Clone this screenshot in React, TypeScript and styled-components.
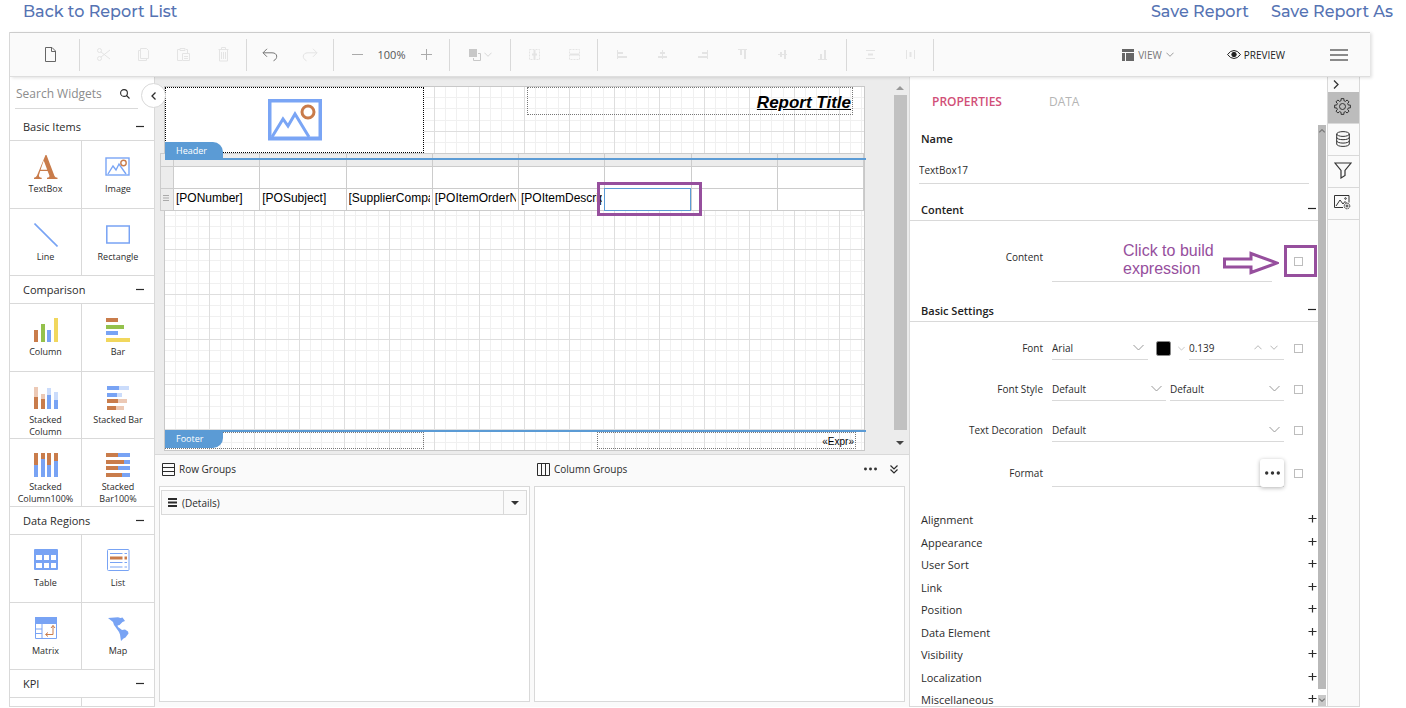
import React, { ReactNode } from "react";
import styled, { createGlobalStyle, css } from "styled-components";

const ui = `"Segoe UI", "Open Sans", "Noto Sans", sans-serif`;
const arial = `"Liberation Sans", Arial, sans-serif`;
const line = "#d9d9d9";
const blue = "#5b9bd5";
const iconBlue = "#7aa5f5";
const iconRust = "#c97b4a";
const purple = "#964f9d";

const GlobalStyle = createGlobalStyle`
  *, *::before, *::after { box-sizing: border-box; }
  body { margin: 0; background: #fff; color: #2b2b2b; font-family: ${ui}; font-size: 10px; }
  button, input, select, textarea { font: inherit; color: inherit; }
  button { padding: 0; border: 0; background: none; cursor: pointer; }
  h2, h3, p { margin: 0; font: inherit; }
  svg { display: block; flex: none; }
`;

/* ---------- page frame ---------- */

const Screen = styled.div`
  display: flex;
  flex-direction: column;
  height: 100vh;
  overflow: hidden;
`;

const TopNav = styled.nav`
  display: flex;
  gap: 22px;
  flex: none;
  height: 32px;
  padding: 0 13px 0 23px;
`;

const NavLink = styled.a<{ $grow?: boolean }>`
  color: #5573b3;
  font-family: Montserrat, Inter, sans-serif;
  font-size: 16px;
  font-weight: 500;
  line-height: 24px;
  text-decoration: none;
  margin-right: ${(p) => (p.$grow ? "auto" : "0")};
`;

const Designer = styled.main`
  display: flex;
  flex-direction: column;
  flex: 1;
  min-height: 0;
  margin: 0 46px 1px 9px;
  border-left: 1px solid ${line};
`;

const Body = styled.div`
  display: flex;
  flex: 1;
  min-height: 0;
`;

/* ---------- toolbar ---------- */

const Toolbar = styled.div`
  position: relative;
  z-index: 3;
  display: flex;
  align-items: center;
  flex: none;
  height: 45px;
  margin-right: -10px;
  padding-left: 12px;
  border-top: 1px solid #ccc;
  border-bottom: 1px solid #dedede;
  background: #fafafa;
  box-shadow: 2px 1px 3px rgba(0, 0, 0, 0.12);
`;

const ToolGroup = styled.div<{ $pad?: number }>`
  display: flex;
  align-items: center;
  height: 32px;
  padding: 0 ${(p) => p.$pad ?? 3}px;
  border-right: 1px solid ${line};
`;

const ToolButton = styled.button<{ $tone?: string; $width?: number }>`
  display: flex;
  align-items: center;
  justify-content: center;
  gap: 3px;
  width: ${(p) => p.$width ?? 40}px;
  height: 32px;
  color: ${(p) => p.$tone ?? "#e4e4e4"};
`;

const ZoomLabel = styled.span`
  width: 29px;
  text-align: center;
  color: #555;
  font-size: 11px;
`;

const ToolEnd = styled.div`
  display: flex;
  align-items: center;
  margin-left: auto;
  padding-right: 22px;
`;

const EndButton = styled.button<{ $dark?: boolean; $gap: number }>`
  display: flex;
  align-items: center;
  gap: ${(p) => (p.$dark ? 3 : 4)}px;
  height: 32px;
  margin-right: ${(p) => p.$gap}px;
  color: ${(p) => (p.$dark ? "#222" : "#777")};
`;

/* ---------- widget panel ---------- */

const WidgetPanel = styled.aside`
  position: relative;
  z-index: 2;
  flex: none;
  width: 145px;
  border-right: 1px solid ${line};
  border-bottom: 1px solid ${line};
  background: #fff;
`;

const WidgetScroll = styled.div`
  height: 100%;
  overflow: hidden;
`;

const SearchBox = styled.label`
  display: flex;
  align-items: center;
  height: 32px;
  margin: 0 16px 4px 5px;
  padding: 2px 8px 0 1px;
  border-bottom: 1px solid ${line};
`;

const SearchInput = styled.input`
  flex: 1;
  min-width: 0;
  padding: 0;
  border: 0;
  outline: 0;
  background: none;
  font-size: 12px;
  &::placeholder { color: #8c8c8c; opacity: 1; }
`;

const CollapseButton = styled.button`
  position: absolute;
  top: 6px;
  right: -12px;
  display: flex;
  align-items: center;
  justify-content: center;
  width: 25px;
  height: 25px;
  border: 1px solid ${line};
  border-radius: 50%;
  background: #fff;
`;

const SectionButton = styled.button`
  display: flex;
  align-items: center;
  justify-content: space-between;
  width: 100%;
  height: 28px;
  padding: 0 10px 0 13px;
  border-bottom: 1px solid ${line};
  font-size: 11px;
`;

const WidgetGrid = styled.div`
  display: grid;
  grid-template-columns: 1fr 1fr;
  grid-auto-rows: 68px 67px;
`;

const WidgetButton = styled.button`
  display: flex;
  flex-direction: column;
  align-items: center;
  gap: 4px;
  padding: 14px 7px 0;
  border-bottom: 1px solid ${line};
  font-size: 9px;
  line-height: 12px;
  &:nth-child(odd) { border-right: 1px solid ${line}; }
`;

/* ---------- canvas ---------- */

const Center = styled.section`
  display: flex;
  flex-direction: column;
  flex: 1;
  min-width: 0;
`;

const CanvasArea = styled.div`
  display: flex;
  justify-content: space-between;
  flex: 1;
  min-height: 0;
  padding: 9px 2px 0 9px;
  overflow: hidden;
  background: #ececec;
`;

const ReportPage = styled.div`
  flex: none;
  width: 701px;
  height: 365px;
  border: 1px solid #c8c8c8;
  background: #fff;
`;

const Band = styled.div<{ $height: number }>`
  position: relative;
  height: ${(p) => p.$height}px;
  background-color: #fff;
  background-image:
    linear-gradient(to right, transparent 44px, #dedede 44px),
    linear-gradient(to bottom, transparent 44px, #dedede 44px),
    linear-gradient(to right, transparent 10px, #f0f0f0 10px, #f0f0f0 11px, transparent 11px, transparent 21px, #f0f0f0 21px, #f0f0f0 22px, transparent 22px, transparent 33px, #f0f0f0 33px, #f0f0f0 34px, transparent 34px),
    linear-gradient(to bottom, transparent 10px, #f0f0f0 10px, #f0f0f0 11px, transparent 11px, transparent 21px, #f0f0f0 21px, #f0f0f0 22px, transparent 22px, transparent 33px, #f0f0f0 33px, #f0f0f0 34px, transparent 34px);
  background-size: 45px 45px;
`;

const BandRule = styled.div`
  position: relative;
  z-index: 1;
  height: 2px;
  margin-right: -2px;
  background: ${blue};
`;

const BandTag = styled.span<{ $bottom?: boolean }>`
  position: absolute;
  z-index: 2;
  left: 0;
  width: 58px;
  padding-left: 11px;
  background: ${blue};
  color: #fff;
  font-size: 9px;
  ${(p) =>
    p.$bottom
      ? css`top: 0; height: 16px; line-height: 14px; border-radius: 0 0 10px 0;`
      : css`bottom: -1px; height: 17px; line-height: 17px; border-radius: 0 10px 0 0;`}
`;

const ReportItem = styled.div<{ $x: number; $w: number; $h: number; $solid?: boolean }>`
  position: absolute;
  top: 0;
  left: ${(p) => p.$x}px;
  width: ${(p) => p.$w}px;
  height: ${(p) => p.$h}px;
  display: flex;
  align-items: center;
  justify-content: ${(p) => (p.$solid ? "center" : "flex-end")};
  padding: ${(p) => (p.$solid ? "0" : "3px 1px 0 0")};
  border: 1px dotted ${(p) => (p.$solid ? "#000" : "#777")};
  background: ${(p) => (p.$solid ? "#fff" : "none")};
  font-family: ${arial};
  color: #000;
`;

const ReportTitle = styled.h2`
  font-size: 17px;
  font-weight: bold;
  font-style: italic;
  text-decoration: underline;
`;

const Expression = styled.span`
  font-size: 10px;
  line-height: 12px;
`;

const Tablix = styled.table`
  position: absolute;
  top: -7px;
  left: -5px;
  width: 704px;
  border-collapse: collapse;
  table-layout: fixed;
  color: #000;
  font-family: ${arial};
  font-size: 12px;
  td, th {
    height: 22px;
    padding: 0 2px 3px;
    border: 1px solid #ccc;
    background: #fff;
    line-height: 14px;
    text-align: left;
    font-weight: normal;
  }
  th { background: #ececec; color: #aaa; }
  thead th { height: 13px; }
`;

const HandleCol = styled.col`
  width: 13px;
`;

const FieldText = styled.span`
  display: block;
  overflow: hidden;
  white-space: nowrap;
`;

const SelectedCell = styled.span`
  position: absolute;
  z-index: 1;
  top: 28px;
  left: 439px;
  width: 87px;
  height: 23px;
  border: 1px solid ${blue};
  background: #fff;
`;

const Callout = styled.span<{ $x: number; $y: number; $w: number; $h: number }>`
  position: absolute;
  z-index: 2;
  left: ${(p) => p.$x}px;
  top: ${(p) => p.$y}px;
  width: ${(p) => p.$w}px;
  height: ${(p) => p.$h}px;
  border: 3px solid ${purple};
  pointer-events: none;
`;

const CanvasScroll = styled.div`
  display: flex;
  flex-direction: column;
  align-items: center;
  gap: 5px;
  height: 364px;
  width: 14px;
  padding: 0 0 5px;
`;

const CanvasThumb = styled.div`
  flex: 1;
  width: 13px;
  margin-bottom: 6px;
  background: #c1c1c1;
`;

/* ---------- grouping panel ---------- */

const Groups = styled.div`
  display: grid;
  grid-template-columns: 1fr 1fr;
  grid-template-rows: 31px 1fr;
  column-gap: 4px;
  flex: none;
  height: 253px;
  padding: 0 4px 5px;
  border-top: 1px solid ${line};
  background: #fafafa;
`;

const GroupTitle = styled.div`
  display: flex;
  align-items: center;
  gap: 4px;
  padding: 0 7px 3px 3px;
`;

const TitleActions = styled.div`
  display: flex;
  align-items: center;
  gap: 13px;
  margin-left: auto;
`;

const GroupBox = styled.div`
  padding: 3px 2px 0 1px;
  border: 1px solid ${line};
  background: #fff;
`;

const GroupRow = styled.div`
  display: flex;
  height: 25px;
  border: 1px solid ${line};
  background: #fafafa;
`;

const GroupName = styled.button`
  display: flex;
  align-items: center;
  gap: 5px;
  flex: 1;
  padding-left: 6px;
`;

const GroupMenu = styled.button`
  display: flex;
  align-items: center;
  justify-content: center;
  width: 23px;
  border-left: 1px solid ${line};
`;

/* ---------- properties ---------- */

const Properties = styled.aside`
  display: flex;
  flex-direction: column;
  flex: none;
  width: 418px;
  border-left: 1px solid ${line};
  border-bottom: 1px solid ${line};
`;

const TabBar = styled.div`
  display: flex;
  align-items: center;
  gap: 47px;
  flex: none;
  height: 48px;
  padding-left: 22px;
`;

const Tab = styled.button<{ $active?: boolean }>`
  color: ${(p) => (p.$active ? "#d14f78" : "#b5b5b5")};
  font-size: 12px;
  font-weight: ${(p) => (p.$active ? 600 : 500)};
`;

const PropsScroll = styled.div`
  display: flex;
  flex: 1;
  min-height: 0;
`;

const PropsContent = styled.div`
  flex: 1;
  min-width: 0;
  overflow: hidden;
`;

const PropsBar = styled.div`
  display: flex;
  flex-direction: column;
  flex: none;
  width: 9px;
  padding-right: 1px;
  color: #777;
`;

const PropsThumb = styled.div`
  flex: 1;
  margin-bottom: 6px;
  padding: 4px 0 0 1px;
  background: #b9b9b9;
`;

const PropsArrow = styled.div`
  height: 11px;
  padding: 3px 0 0 1px;
  background: #c9c9c9;
`;

const NameField = styled.label`
  display: block;
  margin: 0 9px 15px 9px;
`;

const NameLabel = styled.span`
  display: block;
  padding: 6px 2px 5px;
  color: #222;
  font-size: 11px;
  font-weight: 600;
  line-height: 16px;
`;

const NameInput = styled.input`
  display: block;
  width: 100%;
  height: 32px;
  padding: 4px 0 0;
  border: 0;
  border-bottom: 1px solid ${line};
  outline: 0;
  background: none;
`;

const PropHeading = styled.button`
  display: flex;
  align-items: center;
  justify-content: space-between;
  width: 100%;
  height: 22px;
  padding: 0 2px 1px 11px;
  border-bottom: 1px solid ${line};
  color: #222;
  font-weight: 600;
  font-size: 11px;
`;

const PropRows = styled.div<{ $top: number; $bottom: number }>`
  display: flex;
  flex-direction: column;
  gap: 17px;
  padding: ${(p) => p.$top}px 0 ${(p) => p.$bottom}px;
`;

const PropRow = styled.div`
  display: grid;
  grid-template-columns: 133px 1fr 9px;
  align-items: center;
  padding-right: 15px;
  column-gap: 9px;
`;

const PropLabel = styled.label`
  text-align: right;
`;

const Controls = styled.div`
  display: flex;
  align-items: center;
  gap: 4px;
  margin-right: 1px;
`;

const SelectBox = styled.span<{ $width?: number }>`
  display: flex;
  align-items: center;
  flex: ${(p) => (p.$width ? "none" : "1")};
  width: ${(p) => (p.$width ? `${p.$width}px` : "auto")};
  height: 24px;
  padding-right: 4px;
  border-bottom: 1px solid ${line};
  color: #999;
`;

const Select = styled.select`
  flex: 1;
  min-width: 0;
  padding: 0;
  border: 0;
  outline: 0;
  appearance: none;
  background: none;
  color: #2b2b2b;
`;

const LineInput = styled.input`
  flex: 1;
  width: 20px;
  min-width: 0;
  padding: 0;
  border: 0;
  outline: 0;
  background: none;
  color: #2b2b2b;
`;

const SpinButton = styled.button`
  width: 16px;
  padding-left: 6px;
`;

const ColorField = styled.span`
  display: flex;
  align-items: center;
  gap: 7px;
  margin: 0 0 0 4px;
  color: #aaa;
`;

const ColorInput = styled.input`
  width: 15px;
  height: 15px;
  padding: 0;
  border: 1px solid #888;
  border-radius: 2px;
  appearance: none;
  background: #000;
  &::-webkit-color-swatch-wrapper { padding: 0; }
  &::-webkit-color-swatch { border: 0; }
`;

const ContentInput = styled.textarea`
  flex: 1;
  min-width: 0;
  height: 51px;
  margin-right: 12px;
  padding: 0;
  border: 0;
  border-bottom: 1px solid ${line};
  outline: 0;
  resize: none;
  background: none;
`;

const FormatBox = styled(SelectBox)`
  height: 28px;
  padding: 0;
`;

const MoreButton = styled.button`
  display: flex;
  align-items: center;
  justify-content: center;
  width: 24px;
  height: 28px;
  border-radius: 3px;
  background: #fff;
  box-shadow: 0 1px 4px rgba(0, 0, 0, 0.3);
  color: #111;
`;

const CheckCell = styled.span<{ $tall?: boolean }>`
  position: relative;
  display: flex;
  align-items: center;
  align-self: ${(p) => (p.$tall ? "end" : "center")};
  height: ${(p) => (p.$tall ? 42 : 9)}px;
`;

const Check = styled.input`
  width: 9px;
  height: 9px;
  margin: 0;
  appearance: none;
  border: 1px solid #bdbdbd;
  background: #fff;
`;

const Hint = styled.span`
  position: absolute;
  right: 24px;
  top: 2px;
  display: flex;
  align-items: flex-end;
  width: 156px;
  color: ${purple};
  font-family: ${arial};
  font-size: 16px;
  line-height: 18px;
  pointer-events: none;
`;

const HintText = styled.span`
  flex: 1;
`;

const SectionList = styled.ul`
  margin: 0;
  padding: 0;
  list-style: none;
`;

const SectionItem = styled.li`
  height: 23px;
  &:nth-child(even) { height: 22px; }
`;

const SectionToggle = styled.button`
  display: flex;
  align-items: center;
  justify-content: space-between;
  width: 100%;
  height: 100%;
  padding: 0 1px 0 11px;
  font-size: 11px;
`;

/* ---------- right rail ---------- */

const Rail = styled.div`
  flex: none;
  width: 33px;
  border: 1px solid ${line};
  border-top: 0;
  background: #fafafa;
`;

const RailButton = styled.button<{ $active?: boolean; $small?: boolean }>`
  display: flex;
  align-items: center;
  justify-content: ${(p) => (p.$small ? "flex-start" : "center")};
  width: 100%;
  height: ${(p) => (p.$small ? 15 : 32)}px;
  padding: ${(p) => (p.$small ? "0 0 0 5px" : "0 2px 2px 0")};
  border-bottom: ${(p) => (p.$small ? "0" : `1px solid ${line}`)};
  background: ${(p) => (p.$active ? "#bcbcbc" : "none")};
  color: #333;
`;

/* ---------- drawings ---------- */

type DrawingProps = { w: number; h: number; children: ReactNode; stroke?: number; box?: string };

const Drawing = ({ w, h, children, stroke = 1, box }: DrawingProps) => (
  <svg width={w} height={h} viewBox={box ?? `0 0 ${w} ${h}`} fill="none" stroke="currentColor" strokeWidth={stroke} aria-hidden="true">
    {children}
  </svg>
);

const Minus = () => <Drawing w={8} h={8} stroke={1.2}><path d="M0 3.500h8" /></Drawing>;
const Plus = () => <Drawing w={9} h={9} stroke={1.2}><path d="M.5 3.500h8M4.500 -.5v8" /></Drawing>;
const Down = ({ w = 11 }: { w?: number }) => (
  <Drawing w={w} h={w === 11 ? 7 : 5} box="0 0 11 7"><path d="M.5 1l5 5 5-5" /></Drawing>
);
const Up = () => <Drawing w={8} h={5} box="0 0 11 7" ><path d="M.5 6l5-5 5 5" /></Drawing>;
const Dots = ({ w }: { w: number }) => (
  <svg width={w} height="4" viewBox="0 0 15 4" aria-hidden="true">
    <path fill="#333" d="M0 2a1.7 1.7 0 1 0 3.4 0 1.7 1.7 0 1 0-3.4 0M5.8 2a1.7 1.7 0 1 0 3.4 0 1.7 1.7 0 1 0-3.4 0M11.6 2a1.7 1.7 0 1 0 3.4 0 1.7 1.7 0 1 0-3.4 0" />
  </svg>
);

const Bars = ({ rects }: { rects: [number, number, number, number, string][] }) => (
  <svg width="24" height="24" aria-hidden="true">
    {rects.map(([x, y, w, h, fill], i) => <rect key={i} x={x} y={y} width={w} height={h} fill={fill} />)}
  </svg>
);

const rust = "#c97c4b";
const paleRust = "#ecc9b5";
const b = "#78a3f4";
const paleBlue = "#cbdcfb";

const icons: Record<string, ReactNode> = {
  TextBox: (
    <svg width="24" height="24" aria-hidden="true">
      <path fill={rust} fillRule="evenodd" d="M11.500 0h1l8 21q.6 1.600 3 1.800V24H13v-1.200q3-.2 2.300-2.500L13.600 16H6.200L5 20q-.5 2.500 2.700 2.800V24H0v-1.200q2.200-.2 3-2.300zM9.700 5.500L6.600 14.800h6.600z" />
    </svg>
  ),
  Image: (
    <Drawing w={26} h={24} stroke={1.4}>
      <g stroke={iconBlue}><rect x="1" y="3" width="23" height="17" /><path d="M3 19l5-8 3 4 3-6 7 10" /></g>
      <circle cx="18.500" cy="8" r="2.700" stroke={rust} />
    </Drawing>
  ),
  Line: <Drawing w={24} h={24} stroke={1.6}><path stroke={b} d="M.5 .5l23 23" /></Drawing>,
  Rectangle: <Drawing w={24} h={24} stroke={1.5}><rect stroke={b} x=".8" y="3" width="22.500" height="17" /></Drawing>,
  Column: <Bars rects={[[0, 12, 4, 12, rust], [7, 6, 4, 18, "#94c14c"], [13, 12, 4, 12, b], [20, 0, 4, 24, "#f1d75d"]]} />,
  Bar: <Bars rects={[[0, 0, 12, 4, rust], [0, 7, 18, 4, "#94c14c"], [0, 13, 12, 4, b], [0, 20, 24, 4, "#f1d75d"]]} />,
  "Stacked Column": (
    <Bars rects={[[0, 1, 4, 10, paleRust], [0, 11, 4, 12, rust], [7, 8, 4, 5, paleRust], [7, 13, 4, 10, rust], [13, 2, 4, 7, paleBlue], [13, 9, 4, 14, b], [20, 6, 4, 8, paleBlue], [20, 14, 4, 9, b]]} />
  ),
  "Stacked Bar": (
    <Bars rects={[[1, 0, 12, 4, b], [13, 0, 10, 4, paleBlue], [1, 7, 10, 4, b], [11, 7, 5, 4, paleBlue], [1, 13, 11, 4, rust], [12, 13, 9, 4, paleRust], [1, 20, 9, 4, rust], [10, 20, 8, 4, paleRust]]} />
  ),
  "Stacked Column100%": (
    <Bars rects={[[0, 0, 4, 12, rust], [0, 12, 4, 12, b], [7, 0, 4, 6, rust], [7, 6, 4, 18, b], [13, 0, 4, 12, rust], [13, 12, 4, 12, b], [20, 0, 4, 8, rust], [20, 8, 4, 16, b]]} />
  ),
  "Stacked Bar100%": (
    <Bars rects={[[0, 0, 12, 4, rust], [12, 0, 12, 4, b], [0, 7, 18, 4, rust], [18, 7, 6, 4, b], [0, 13, 12, 4, rust], [12, 13, 12, 4, b], [0, 20, 16, 4, rust], [16, 20, 8, 4, b]]} />
  ),
  Table: (
    <svg width="24" height="24" aria-hidden="true">
      <rect width="24" height="21" rx="1" fill={b} />
      <path fill="#fff" d="M2 6h6v5H2zM10 6h5v5h-5zM17 6h5v5h-5zM2 14h6v5H2zM10 14h5v5h-5zM17 14h5v5h-5z" />
    </svg>
  ),
  List: (
    <Drawing w={24} h={24}>
      <rect x="1.500" y=".5" width="21.500" height="21" rx="1" stroke={b} />
      <path stroke={b} d="M4 4.500h12.500M18.500 4.500H21M4 13.500h12.500M18.500 13.500H21M4 18h12.500M18.500 18H21" />
      <path stroke={rust} strokeWidth="3" d="M4 9h12.500M18.500 9H21" />
    </Drawing>
  ),
  Matrix: (
    <Drawing w={24} h={24}>
      <path fill={b} stroke="none" d="M1 0h22v7H1z" />
      <path stroke={b} d="M1.500 .5h21v21h-21zM8 7v14M1.500 12H8M1.500 16.500H8" />
      <path stroke={rust} d="M19 8.500v9h-7M17 11l2-2.500 2 2.500M14 15.500l-2.500 2 2.500 2" />
    </Drawing>
  ),
  Map: (
    <svg width="24" height="24" aria-hidden="true">
      <path fill={b} d="M2 1l10-.8 2.500.8 2-.5L19 4l-2.500 1-3 3-2 .5.5 1.500 4 3 3-.5 3 2 .5 2-3 4-2 1-2.500 2.500-.5-3-.5-3.500-1-2.500L9.500 10 8 8 7 5 4.500 3z" />
    </svg>
  ),
};

const sections = [
  { title: "Basic Items", items: ["TextBox", "Image", "Line", "Rectangle"] },
  { title: "Comparison", items: ["Column", "Bar", "Stacked Column", "Stacked Bar", "Stacked Column100%", "Stacked Bar100%"] },
  { title: "Data Regions", items: ["Table", "List", "Matrix", "Map"] },
  { title: "KPI", items: [] },
];

const edits: [string, ReactNode][] = [
  ["Cut", <><circle cx="3.500" cy="3.500" r="2" /><circle cx="3.500" cy="11.500" r="2" /><path d="M5 5l9 7M5 10l9-7" /></>],
  ["Copy", <><path d="M4.500 1.500h6l2 2v8h-8z" /><path d="M4.500 3.500h-2v10h8v-2" /></>],
  ["Paste", <><path d="M6 13.500H1.500v-11H4M10 2.500h1.500V6M4 1.500h5v2H4zM6.500 6.500h7v7h-7zM8 9.500h4M8 11.500h4" /></>],
  ["Delete", <><path d="M2.500 2.500h10M5.500 2V.5h4V2M3.500 3v11h8V3M5.500 5v7M7.500 5v7M9.500 5v7" /></>],
];

const merges: [string, ReactNode][] = [
  ["Merge rows", <><path strokeDasharray="2 1" d="M2.500 2.500h10v10h-10z" /><path strokeWidth="2" d="M7.500 3v9M5 7.500h5" /></>],
  ["Merge columns", <><path strokeDasharray="2 1" d="M2.500 2.500h10v10h-10z" /><path strokeWidth="2" d="M3 7.500h9" /></>],
];

const aligns: [string, ReactNode][] = [
  ["Align left", <><path d="M2.500 3v9" /><path strokeWidth="2" d="M3 6h5M3 10h9" /></>],
  ["Align center", <><path d="M7.500 3v9" /><path strokeWidth="2" d="M5 6h5M3 10h9" /></>],
  ["Align right", <><path d="M12.500 3v9" /><path strokeWidth="2" d="M7 6h5M3 10h9" /></>],
  ["Align top", <><path d="M3 2.500h9" /><path strokeWidth="2" d="M6 3v5M10 3v9" /></>],
  ["Align middle", <><path d="M3 7.500h9" /><path strokeWidth="2" d="M6 5v5M10 3v9" /></>],
  ["Align bottom", <><path d="M3 12.500h9" /><path strokeWidth="2" d="M6 7v5M10 3v9" /></>],
];

const spacings: [string, ReactNode][] = [
  ["Space vertically", <><path d="M3 3.500h9M3 11.500h9" /><path strokeWidth="2" d="M5 7.500h5" /></>],
  ["Space horizontally", <><path d="M3.500 3v9M11.500 3v9" /><path strokeWidth="2" d="M7.500 5v5" /></>],
];

const ToolSet = ({ tools, pad }: { tools: [string, ReactNode][]; pad?: number }) => (
  <ToolGroup $pad={pad}>
    {tools.map(([name, art]) => (
      <ToolButton key={name} aria-label={name}><Drawing w={15} h={15}>{art}</Drawing></ToolButton>
    ))}
  </ToolGroup>
);

const DesignerToolbar = () => (
  <Toolbar>
    <ToolGroup $pad={9}>
      <ToolButton aria-label="New" $tone="#666" $width={39}>
        <Drawing w={11} h={15}><path d="M.5 .5h6.500l3.500 3.500v10.500H.5zM6.500 .5V4.500h4" /></Drawing>
      </ToolButton>
    </ToolGroup>
    <ToolSet tools={edits} />
    <ToolGroup>
      <ToolButton aria-label="Undo" $tone="#777"><Drawing w={16} h={14}><path d="M5 .8L1 4.800l4 4M1 4.800h9c6 0 6 6 1.500 8" /></Drawing></ToolButton>
      <ToolButton aria-label="Redo"><Drawing w={16} h={14}><path d="M11 .8l4 4-4 4M15 4.800H6c-6 0-6 6-1.500 8" /></Drawing></ToolButton>
    </ToolGroup>
    <ToolGroup>
      <ToolButton aria-label="Zoom out" $tone="#aaa"><Drawing w={11} h={11}><path d="M0 5.500h11" /></Drawing></ToolButton>
      <ZoomLabel>100%</ZoomLabel>
      <ToolButton aria-label="Zoom in" $tone="#aaa"><Drawing w={11} h={11}><path d="M0 5.500h11M5.500 0v11" /></Drawing></ToolButton>
    </ToolGroup>
    <ToolGroup $pad={9}>
      <ToolButton aria-label="Order" $width={42} $tone="#c8c8c8">
        <Drawing w={12} h={12}><path fill="currentColor" stroke="none" d="M0 0h8v8H0z" /><path d="M9 4.500h2.500v7h-7V9" /></Drawing>
        <Down w={8} />
      </ToolButton>
    </ToolGroup>
    <ToolSet tools={merges} />
    <ToolSet tools={aligns} pad={4} />
    <ToolSet tools={spacings} />
    <ToolEnd>
      <EndButton $gap={53}>
        <svg width="12" height="12" aria-hidden="true"><path fill="#666" d="M0 0h12v3H0zM0 4h3v8H0zM4 4h8v8H4z" /></svg>
        VIEW
        <Down w={8} />
      </EndButton>
      <EndButton $dark $gap={45}>
        <Drawing w={14} h={9}><path d="M.5 4.500Q3.500 .5 7 .5t6.500 4Q10.500 8.500 7 8.500T.5 4.500z" /><circle cx="7" cy="4.500" r="2.200" fill="currentColor" /></Drawing>
        PREVIEW
      </EndButton>
      <ToolButton aria-label="Menu" $tone="#666" $width={18}>
        <Drawing w={18} h={12} stroke={1.5}><path d="M0 1h18M0 6h18M0 11h18" /></Drawing>
      </ToolButton>
    </ToolEnd>
  </Toolbar>
);

const Widgets = () => (
  <WidgetPanel>
    <WidgetScroll>
      <SearchBox>
        <SearchInput placeholder="Search Widgets" aria-label="Search Widgets" />
        <Drawing w={10} h={10} stroke={1.1}><circle cx="4" cy="4" r="3.400" /><path d="M6.500 6.500l3 3" /></Drawing>
      </SearchBox>
      {sections.map((s) => (
        <section key={s.title}>
          <SectionButton>{s.title}<Minus /></SectionButton>
          <WidgetGrid>
            {s.items.length
              ? s.items.map((name) => <WidgetButton key={name}>{icons[name]}{name}</WidgetButton>)
              : <><WidgetButton aria-label="Gauge" /><WidgetButton aria-label="Indicator" /></>}
          </WidgetGrid>
        </section>
      ))}
    </WidgetScroll>
    <CollapseButton aria-label="Collapse widgets">
      <Drawing w={5} h={8} stroke={1.3}><path d="M4.500 .5L1 4l3.500 3.500" /></Drawing>
    </CollapseButton>
  </WidgetPanel>
);

const fields = ["[PONumber]", "[POSubject]", "[SupplierCompa", "[POItemOrderN", "[POItemDescrip", "", "", ""];

const Canvas = () => (
  <CanvasArea>
    <ReportPage>
      <Band $height={71}>
        <ReportItem $x={0} $w={259} $h={66} $solid>
          <Drawing w={54} h={42} stroke={3}>
            <g stroke={iconBlue}><rect x="1.500" y="1.500" width="51" height="38" strokeWidth="4" /><path d="M4 38l11-18 5 7 7-12 14 23" /></g>
            <circle cx="40" cy="13" r="6" stroke={iconRust} />
          </Drawing>
        </ReportItem>
        <ReportItem $x={362} $w={326} $h={28}><ReportTitle>Report Title</ReportTitle></ReportItem>
        <BandTag>Header</BandTag>
      </Band>
      <BandRule />
      <Band $height={270}>
        <Tablix>
          <colgroup><HandleCol />{fields.map((_, i) => <col key={i} />)}</colgroup>
          <thead><tr><th />{fields.map((_, i) => <th key={i} />)}</tr></thead>
          <tbody>
            <tr><th />{fields.map((_, i) => <td key={i} />)}</tr>
            <tr>
              <th><Drawing w={6} h={6}><path d="M0 .5h6M0 3h6M0 5.500h6" /></Drawing></th>
              {fields.map((f, i) => <td key={i}><FieldText>{f}</FieldText></td>)}
            </tr>
          </tbody>
        </Tablix>
        <SelectedCell />
        <Callout $x={432} $y={22} $w={105} $h={34} />
      </Band>
      <BandRule />
      <Band $height={18}>
        <ReportItem $x={0} $w={259} $h={17} />
        <ReportItem $x={432} $w={259} $h={17}><Expression>«Expr»</Expression></ReportItem>
        <BandTag $bottom>Footer</BandTag>
      </Band>
    </ReportPage>
    <CanvasScroll>
      <svg width="8" height="4" aria-hidden="true"><path fill="#999" d="M0 4l4-4 4 4z" /></svg>
      <CanvasThumb />
      <svg width="8" height="4" aria-hidden="true"><path fill="#444" d="M0 0h8L4 4z" /></svg>
    </CanvasScroll>
  </CanvasArea>
);

const Grouping = () => (
  <Groups>
    <GroupTitle>
      <Drawing w={13} h={13}><path d="M.5 .5h12v12H.5zM.5 4.500h12M.5 8.500h12" /></Drawing>
      Row Groups
    </GroupTitle>
    <GroupTitle>
      <Drawing w={13} h={13}><path d="M.5 .5h12v12H.5zM4.500 .5v12M8.500 .5v12" /></Drawing>
      Column Groups
      <TitleActions>
        <Dots w={13} />
        <Drawing w={8} h={9} stroke={1.2}><path d="M.5 .5L4 4 7.500 .5M.5 4.500L4 8l3.500-3.500" /></Drawing>
      </TitleActions>
    </GroupTitle>
    <GroupBox>
      <GroupRow>
        <GroupName><Drawing w={9} h={9} stroke={2}><path d="M0 1h9M0 4.500h9M0 8h9" /></Drawing>(Details)</GroupName>
        <GroupMenu aria-label="Group options"><svg width="8" height="4" aria-hidden="true"><path fill="#333" d="M0 0h8L4 4z" /></svg></GroupMenu>
      </GroupRow>
    </GroupBox>
    <GroupBox />
  </Groups>
);

const collapsed = ["Alignment", "Appearance", "User Sort", "Link", "Position", "Data Element", "Visibility", "Localization", "Miscellaneous"];

const Dropdown = ({ id, value, label, width }: { id?: string; value: string; label?: string; width?: number }) => (
  <SelectBox $width={width}>
    <Select id={id} aria-label={label} defaultValue={value}><option>{value}</option></Select>
    <Down />
  </SelectBox>
);

const ExprCheck = ({ name }: { name: string }) => (
  <CheckCell><Check type="checkbox" aria-label={`${name} expression`} /></CheckCell>
);

const PropertyPanel = () => (
  <Properties>
    <TabBar role="tablist">
      <Tab role="tab" aria-selected="true" $active>PROPERTIES</Tab>
      <Tab role="tab" aria-selected="false">DATA</Tab>
    </TabBar>
    <PropsScroll>
      <PropsContent>
        <NameField><NameLabel>Name</NameLabel><NameInput defaultValue="TextBox17" /></NameField>
        <PropHeading>Content<Minus /></PropHeading>
        <PropRows $top={10} $bottom={18}>
          <PropRow>
            <PropLabel htmlFor="content">Content</PropLabel>
            <Controls><ContentInput id="content" /></Controls>
            <CheckCell $tall>
              <Check type="checkbox" aria-label="Content expression" />
              <Hint>
                <HintText>Click to build expression</HintText>
                <Drawing w={56} h={27} stroke={3}><path d="M1.500 8H28V2.500L54 12 28 21.500V16H1.500z" /></Drawing>
              </Hint>
              <Callout $x={-10} $y={5} $w={33} $h={32} />
            </CheckCell>
          </PropRow>
        </PropRows>
        <PropHeading>Basic Settings<Minus /></PropHeading>
        <PropRows $top={14} $bottom={21}>
          <PropRow>
            <PropLabel htmlFor="font">Font</PropLabel>
            <Controls>
              <Dropdown id="font" value="Arial" width={96} />
              <ColorField>
                <ColorInput type="color" defaultValue="#000000" aria-label="Font color" />
                <Down w={7} />
              </ColorField>
              <SelectBox>
                <LineInput defaultValue="0.139" aria-label="Font size" />
                <SpinButton aria-label="Increase"><Up /></SpinButton>
                <SpinButton aria-label="Decrease"><Down w={8} /></SpinButton>
              </SelectBox>
            </Controls>
            <ExprCheck name="Font" />
          </PropRow>
          <PropRow>
            <PropLabel htmlFor="font-style">Font Style</PropLabel>
            <Controls><Dropdown id="font-style" value="Default" /><Dropdown label="Font weight" value="Default" /></Controls>
            <ExprCheck name="Font style" />
          </PropRow>
          <PropRow>
            <PropLabel htmlFor="decoration">Text Decoration</PropLabel>
            <Controls><Dropdown id="decoration" value="Default" /></Controls>
            <ExprCheck name="Text decoration" />
          </PropRow>
          <PropRow>
            <PropLabel htmlFor="format">Format</PropLabel>
            <Controls>
              <FormatBox><LineInput id="format" /><MoreButton aria-label="Edit format"><Dots w={15} /></MoreButton></FormatBox>
            </Controls>
            <ExprCheck name="Format" />
          </PropRow>
        </PropRows>
        <SectionList>
          {collapsed.map((name) => (
            <SectionItem key={name}><SectionToggle>{name}<Plus /></SectionToggle></SectionItem>
          ))}
        </SectionList>
      </PropsContent>
      <PropsBar>
        <PropsThumb><Drawing w={6} h={4} box="0 0 11 7" stroke={2}><path d="M.5 6l5-5 5 5" /></Drawing></PropsThumb>
        <PropsArrow><Drawing w={6} h={4} box="0 0 11 7" stroke={2}><path d="M.5 1l5 5 5-5" /></Drawing></PropsArrow>
      </PropsBar>
    </PropsScroll>
  </Properties>
);

const gear = Array.from({ length: 8 }, (_, i) => {
  const point = (r: number, deg: number) => {
    const a = ((i * 45 + deg) * Math.PI) / 180;
    return `${(8.5 + r * Math.cos(a)).toFixed(2)} ${(8.5 + r * Math.sin(a)).toFixed(2)}`;
  };
  return `${point(6, -14)}L${point(8, -10)}L${point(8, 10)}L${point(6, 14)}`;
}).join("L");

const SideRail = () => (
  <Rail>
    <RailButton $small aria-label="Collapse properties"><Drawing w={6} h={9} stroke={1.3}><path d="M1 .5l4 4-4 4" /></Drawing></RailButton>
    <RailButton $active aria-label="Properties">
      <Drawing w={17} h={17}><path d={`M${gear}z`} /><circle cx="8.500" cy="8.500" r="3" /></Drawing>
    </RailButton>
    <RailButton aria-label="Data">
      <Drawing w={14} h={16}><ellipse cx="7" cy="3" rx="6.300" ry="2.400" /><path d="M.7 3v10c0 3.200 12.600 3.200 12.600 0V3M.7 6.300c0 3.200 12.600 3.200 12.600 0M.7 9.700c0 3.200 12.600 3.200 12.600 0" /></Drawing>
    </RailButton>
    <RailButton aria-label="Parameters">
      <Drawing w={18} h={17} stroke={1.2}><path d="M1 1h16l-6 7.500v5L7 16V8.500z" /></Drawing>
    </RailButton>
    <RailButton aria-label="Image manager">
      <Drawing w={17} h={15}><path d="M9 12.500H.5V.5h14.500v7M2 11l4-6 3 4 2-2.500 1.500 1.500" /><circle cx="11.500" cy="3.500" r=".8" /><circle cx="13" cy="11" r="2.800" strokeDasharray="1.500 .7" /><circle cx="13" cy="11" r="1" /></Drawing>
    </RailButton>
  </Rail>
);

export default function App() {
  return (
    <Screen>
      <GlobalStyle />
      <TopNav>
        <NavLink href="#reports" $grow>Back to Report List</NavLink>
        <NavLink href="#save">Save Report</NavLink>
        <NavLink href="#save-as">Save Report As</NavLink>
      </TopNav>
      <Designer>
        <DesignerToolbar />
        <Body>
          <Widgets />
          <Center><Canvas /><Grouping /></Center>
          <PropertyPanel />
          <SideRail />
        </Body>
      </Designer>
    </Screen>
  );
}
